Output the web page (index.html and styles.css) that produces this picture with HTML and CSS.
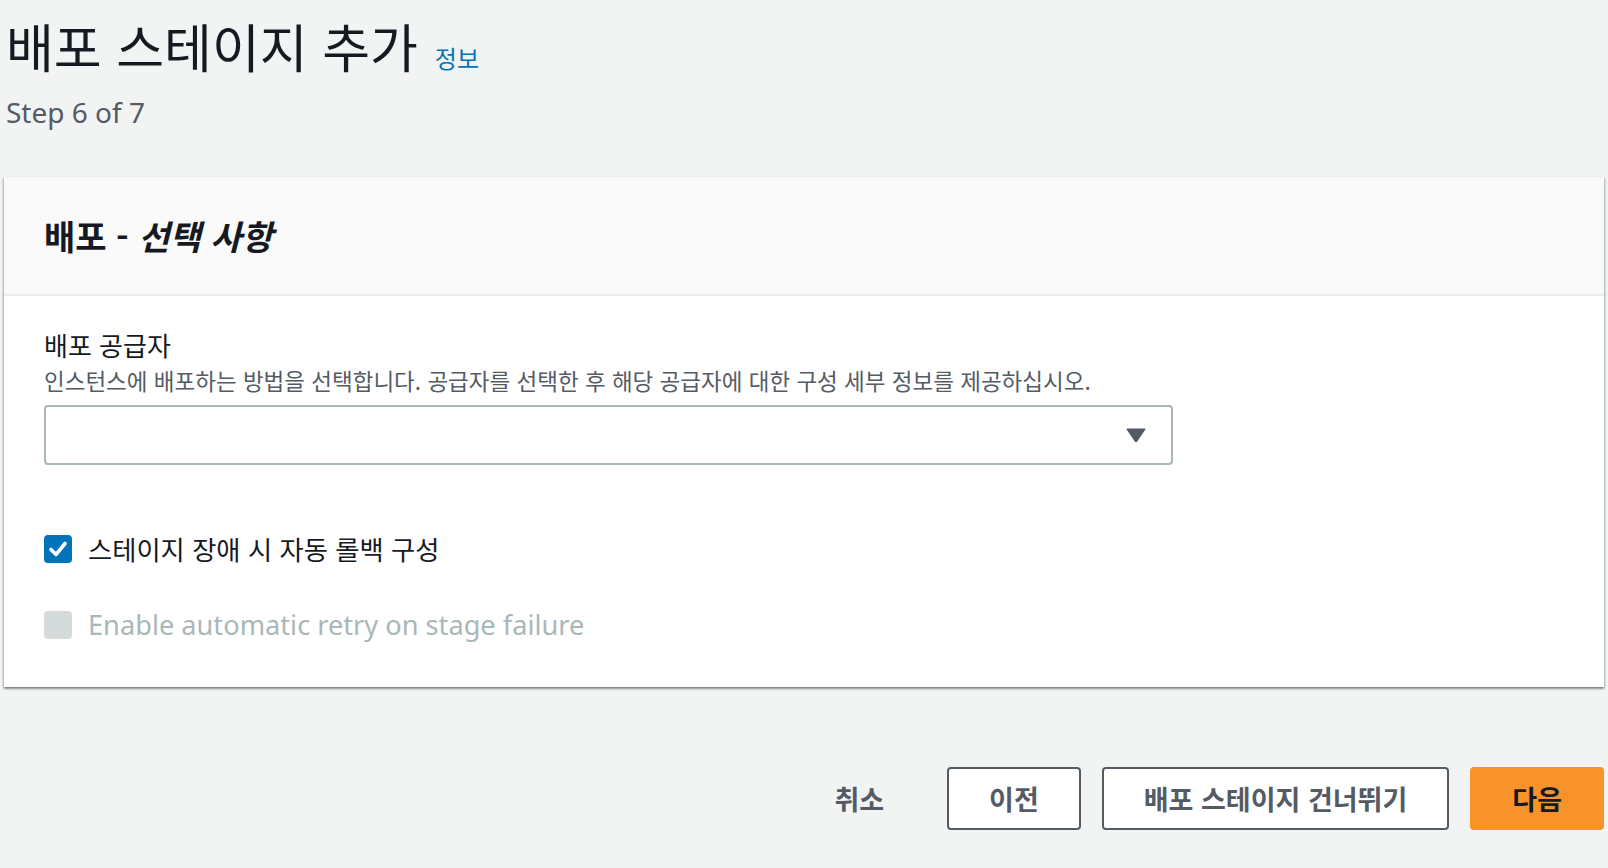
FILE: index.html
```html
<!DOCTYPE html>
<html lang="ko">
<head>
<meta charset="utf-8">
<link rel="stylesheet" href="styles.css">
</head>
<body>
<div class="page">
  <header class="page-head">
    <div class="title-row">
      <h1 class="title">배포 스테이지 추가</h1>
      <a class="info" href="#">정보</a>
    </div>
    <div class="step">Step 6 of 7</div>
  </header>

  <section class="card">
    <div class="card-head">
      <h2 class="card-title">배포 - <em>선택 사항</em></h2>
    </div>
    <div class="card-body">
      <div class="field">
        <div class="label">배포 공급자</div>
        <div class="desc">인스턴스에 배포하는 방법을 선택합니다. 공급자를 선택한 후 해당 공급자에 대한 구성 세부 정보를 제공하십시오.</div>
        <div class="select">
          <svg class="caret" width="22" height="16" viewBox="0 0 22 16"><path d="M2.5 1.5 H19.5 Q21 1.5 20.2 2.8 L12.2 14.6 Q11 16 9.8 14.6 L1.8 2.8 Q1 1.5 2.5 1.5 Z" fill="#545b64"/></svg>
        </div>
      </div>
      <label class="check checked">
        <span class="box"><svg width="28" height="28" viewBox="0 0 28 28"><path d="M7 14.5 L12 19.5 L21 8.5" fill="none" stroke="#fff" stroke-width="3.6" stroke-linecap="round" stroke-linejoin="round"/></svg></span>
        <span class="check-text">스테이지 장애 시 자동 롤백 구성</span>
      </label>
      <label class="check disabled">
        <span class="box"></span>
        <span class="check-text">Enable automatic retry on stage failure</span>
      </label>
    </div>
  </section>

  <footer class="actions">
    <button class="btn link">취소</button>
    <button class="btn normal">이전</button>
    <button class="btn normal">배포 스테이지 건너뛰기</button>
    <button class="btn primary">다음</button>
  </footer>
</div>
</body>
</html>
```

FILE: styles.css
```css
html, body {
  margin: 0;
  padding: 0;
  background: #f2f3f3;
}
body {
  font-family: "Noto Sans", "Noto Sans CJK KR", sans-serif;
  color: #16191f;
}
.page {
  padding: 0 4px;
}
.page-head {
  padding: 12px 0 0 2px;
  height: 177px;
  box-sizing: border-box;
}
.title-row {
  display: flex;
  align-items: baseline;
  gap: 17px;
}
.title {
  margin: 0;
  font-family: "Noto Sans CJK KR", sans-serif;
  font-weight: 400;
  font-size: 52px;
  line-height: 68px;
}
.info {
  font-family: "Noto Sans CJK KR", sans-serif;
  font-size: 24px;
  color: #0073bb;
  text-decoration: none;
}
.step {
  margin-top: 14px;
  font-size: 28px;
  line-height: 36px;
  color: #545b64;
}
.card {
  background: #fff;
  box-shadow: 0 2px 2px 0 rgba(0, 28, 36, 0.35), 1px 1px 2px 0 rgba(0, 28, 36, 0.18), -1px 1px 2px 0 rgba(0, 28, 36, 0.18);
}
.card-head {
  background: #fafafa;
  border-bottom: 2px solid #eaeded;
  height: 119px;
  box-sizing: border-box;
  padding: 0 40px;
  display: flex;
  align-items: center;
}
.card-title {
  margin: 0;
  font-family: "Noto Sans CJK KR", sans-serif;
  font-size: 34px;
  font-weight: 700;
  line-height: 40px;
}
.card-title em {
  font-style: italic;
}
.card-body {
  padding: 31px 40px 44px;
}
.label {
  font-family: "Noto Sans CJK KR", sans-serif;
  font-size: 26px;
  line-height: 36px;
}
.desc {
  font-family: "Noto Sans CJK KR", sans-serif;
  font-size: 22.5px;
  line-height: 34px;
  color: #545b64;
}
.select {
  margin-top: 8px;
  width: 1129px;
  height: 60px;
  box-sizing: border-box;
  border: 2px solid #aab7b8;
  border-radius: 4px;
  background: #fff;
  display: flex;
  align-items: center;
  justify-content: flex-end;
  padding-right: 24px;
}
.caret {
  display: block;
}
.check {
  display: flex;
  align-items: center;
  gap: 16px;
  font-family: "Noto Sans", "Noto Sans CJK KR", sans-serif;
  font-size: 27.2px;
  line-height: 36px;
}
.checked {
  margin-top: 66px;
}
.disabled {
  margin-top: 40px;
  color: #aab7b8;
}
.box {
  width: 28px;
  height: 28px;
  border-radius: 4px;
  box-sizing: border-box;
  flex: none;
}
.box svg {
  display: block;
}
.checked .box {
  background: #0073bb;
}
.disabled .box {
  background: #d5dbdb;
}
.checked .check-text {
  font-family: "Noto Sans CJK KR", sans-serif;
  font-size: 26.3px;
}
.actions {
  display: flex;
  justify-content: flex-end;
  gap: 21px;
  margin-top: 80px;
}
.btn {
  height: 63px;
  box-sizing: border-box;
  padding: 0 40px;
  border-radius: 4px;
  font-family: "Noto Sans CJK KR", sans-serif;
  font-size: 27px;
  font-weight: 700;
  color: #545b64;
  background: #fff;
  border: 2px solid #545b64;
}
.btn.link {
  background: transparent;
  border-color: transparent;
}
.btn.primary {
  background: #f8932c;
  border-color: #f8932c;
  color: #16191f;
}
```
